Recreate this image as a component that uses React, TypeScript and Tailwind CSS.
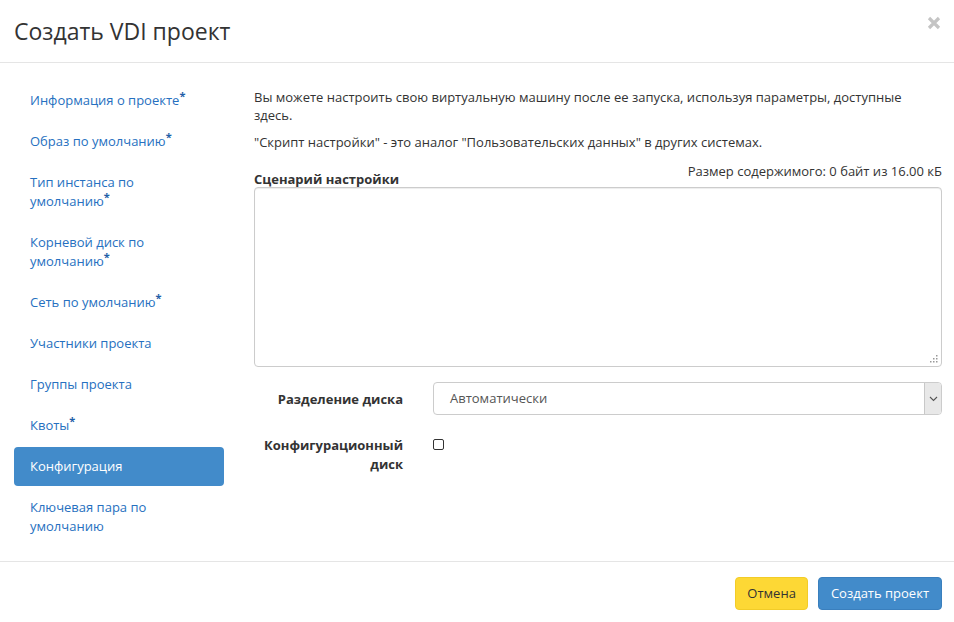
import React from "react";

const items: { first?: string; last: string; star?: boolean; active?: boolean }[] = [
  { last: "Информация о проекте", star: true },
  { last: "Образ по умолчанию", star: true },
  { first: "Тип инстанса по", last: "умолчанию", star: true },
  { first: "Корневой диск по", last: "умолчанию", star: true },
  { last: "Сеть по умолчанию", star: true },
  { last: "Участники проекта" },
  { last: "Группы проекта" },
  { last: "Квоты", star: true },
  { last: "Конфигурация", active: true },
  { first: "Ключевая пара по", last: "умолчанию" },
];

export default function App() {
  return (
    <div
      className="w-[954px] h-[622px] bg-white flex flex-col text-[13px] text-[#333]"
      style={{ fontFamily: '"Open Sans", "Noto Sans", sans-serif' }}
    >
      {/* header */}
      <div className="h-[63px] border-b border-[#e5e5e5] flex items-center justify-between pl-[14px] pr-[13px] shrink-0">
        <h1 className="text-[23px] leading-none text-[#333] mt-[1px]">Создать VDI проект</h1>
        <svg width="14" height="14" viewBox="0 0 14 14" className="-mt-[17px]">
          <path d="M2 2 L12 12 M12 2 L2 12" stroke="#c4c4c4" strokeWidth="3.2" strokeLinecap="butt" />
        </svg>
      </div>

      {/* body */}
      <div className="flex-1 flex pt-[18px] pl-[14px] pr-[12px]">
        {/* sidebar */}
        <div className="w-[210px] shrink-0 flex flex-col gap-[2px]">
          {items.map((it) => (
            <div
              key={it.last + (it.first ?? "")}
              className={
                it.active
                  ? "rounded-[4px] bg-[#428bca] text-white px-[16px] py-[10px] leading-[19px]"
                  : "px-[16px] py-[10px] leading-[19px] text-[#2670c0]"
              }
            >
              {it.first && <div>{it.first}</div>}
              <div className="whitespace-nowrap">
                {it.last}
                {it.star && (
                  <span className="relative top-[-5px] text-[11px] font-bold text-[#1f5fa8] leading-none">*</span>
                )}
              </div>
            </div>
          ))}
        </div>

        {/* content */}
        <div className="flex-1 ml-[30px] pt-[7px]">
          <p className="leading-[18px]">
            Вы можете настроить свою виртуальную машину после ее запуска, используя параметры, доступные здесь.
          </p>
          <p className="leading-[18px] mt-[9px]">
            "Скрипт настройки" - это аналог "Пользовательских данных" в других системах.
          </p>
          <div className="mt-[11px] flex justify-between items-start">
            <div className="font-bold pt-[8px] leading-[18px]">Сценарий настройки</div>
            <div className="leading-[18px]">Размер содержимого: 0 байт из 16.00 кБ</div>
          </div>
          <div className="relative mt-[-1px] h-[180px] rounded-[4px] border border-[#cccccc] shadow-[inset_0_1px_1px_rgba(0,0,0,0.075)]">
            <svg width="8" height="8" viewBox="0 0 8 8" className="absolute right-[3px] bottom-[3px]">
              <rect x="6" y="0" width="1.5" height="1.5" fill="#999" />
              <rect x="3" y="3" width="1.5" height="1.5" fill="#999" />
              <rect x="6" y="3" width="1.5" height="1.5" fill="#999" />
              <rect x="0" y="6" width="1.5" height="1.5" fill="#999" />
              <rect x="3" y="6" width="1.5" height="1.5" fill="#999" />
              <rect x="6" y="6" width="1.5" height="1.5" fill="#999" />
            </svg>
          </div>

          <div className="mt-[15px] flex items-center">
            <div className="w-[149px] text-right font-bold leading-[18px]">Разделение диска</div>
            <div className="ml-[30px] flex-1 h-[33px] rounded-[4px] border border-[#cccccc] flex items-stretch overflow-hidden">
              <div className="flex-1 pl-[16px] flex items-center text-[#555]">Автоматически</div>
              <div className="w-[17px] bg-[#e8e8e8] border-l border-[#c8c8c8] flex items-center justify-center">
                <svg width="9" height="6" viewBox="0 0 9 6">
                  <path d="M1 1 L4.5 4.5 L8 1" stroke="#555" strokeWidth="1.1" fill="none" />
                </svg>
              </div>
            </div>
          </div>

          <div className="mt-[21px] flex items-start">
            <div className="w-[149px] text-right font-bold leading-[19px]">
              Конфигурационный
              <br />
              диск
            </div>
            <div className="ml-[30px] mt-[3px] w-[11px] h-[11px] rounded-[2px] border border-[#333] bg-white" />
          </div>
        </div>
      </div>

      {/* footer */}
      <div className="h-[61px] border-t border-[#e5e5e5] flex items-start pt-[15px] justify-end gap-[10px] pr-[12px] shrink-0">
        <button className="h-[33px] px-[11px] rounded-[4px] bg-[#fdd835] border border-[#f2cc28] text-[#333] text-[13px]">
          Отмена
        </button>
        <button className="h-[33px] px-[12px] rounded-[4px] bg-[#428bca] border border-[#3a7fbd] text-white text-[13px]">
          Создать проект
        </button>
      </div>
    </div>
  );
}
